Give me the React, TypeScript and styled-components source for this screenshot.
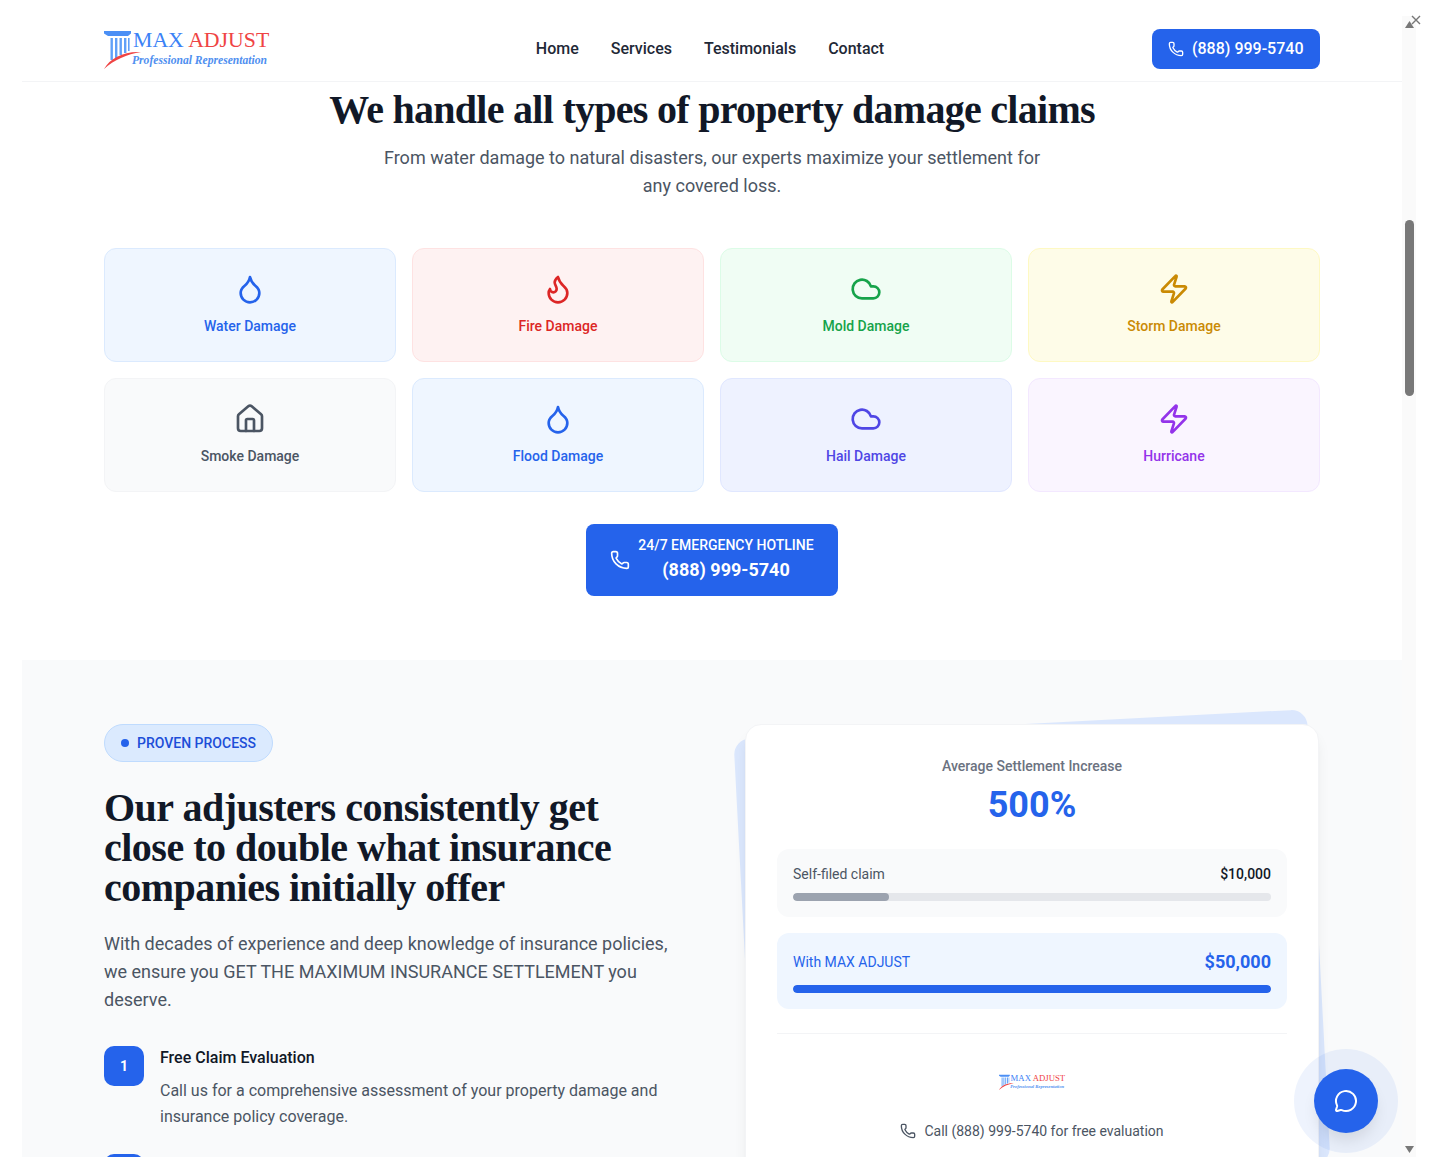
import React from "react";
import styled, { createGlobalStyle } from "styled-components";
import { Droplet, Flame, Cloud, Zap, Home, Phone, MessageCircle } from "lucide-react";

const Global = createGlobalStyle`
  html, body { margin: 0; padding: 0; background: #fff; height: 1176px; overflow: hidden; }
  body { font-family: Roboto, "Liberation Sans", sans-serif; color: #111827; }
  * { box-sizing: border-box; }
`;

const Stage = styled.div`
  position: relative;
  width: 1437px;
  height: 1176px;
  overflow: hidden;
  background: #fff;
`;
const Frame = styled.div`
  display: flex;
  margin-left: 22px;
  width: 1394px;
  height: 1157px;
`;
const Viewport = styled.div`
  width: 1380px;
  height: 1157px;
  overflow: hidden;
  background: #fff;
`;
const Header = styled.header`
  display: flex;
  align-items: center;
  justify-content: space-between;
  height: 82px;
  padding: 17px 82px 0;
  border-bottom: 1px solid #f3f4f6;
`;
const Nav = styled.nav`
  display: flex;
  gap: 32px;
  margin-left: -1px;
`;
const NavLink = styled.a`
  font-size: 16px;
  font-weight: 500;
  line-height: 24px;
  color: #1f2937;
`;
const CallButton = styled.a`
  display: flex;
  align-items: center;
  gap: 8px;
  width: 168px;
  height: 40px;
  padding: 0 16px 1px;
  border-radius: 8px;
  background: #2563eb;
  color: #fff;
  font-size: 16px;
  font-weight: 500;
`;

const LogoWrap = styled.div<{ $s: number }>`
  position: relative;
  width: ${(p) => 165 * p.$s}px;
  height: ${(p) => 41 * p.$s}px;
  font-family: "Liberation Serif", serif;
`;
const LogoArt = styled.svg`
  position: absolute;
  left: 0;
  top: 0;
  width: 100%;
  height: 100%;
`;
const LogoName = styled.div<{ $s: number }>`
  position: absolute;
  left: ${(p) => 29 * p.$s}px;
  top: ${(p) => -2 * p.$s}px;
  font-size: ${(p) => 21.8 * p.$s}px;
  line-height: ${(p) => 26 * p.$s}px;
  white-space: nowrap;
`;
const LogoBlue = styled.span`
  color: #3b82f6;
`;
const LogoRed = styled.span`
  color: #ef4444;
`;
const LogoTag = styled.div<{ $s: number }>`
  position: absolute;
  left: ${(p) => 28 * p.$s}px;
  top: ${(p) => 25 * p.$s}px;
  font-size: ${(p) => 11.6 * p.$s}px;
  line-height: ${(p) => 13 * p.$s}px;
  font-style: italic;
  font-weight: 700;
  color: #4f8ff0;
  white-space: nowrap;
`;

const Claims = styled.section`
  padding: 8px 82px 64px;
`;
const ClaimsTitle = styled.h2`
  margin: 0;
  text-align: center;
  font-family: "Liberation Serif", serif;
  font-weight: 700;
  font-size: 40px;
  line-height: 40px;
  letter-spacing: -0.72px;
  color: #111827;
`;
const ClaimsLead = styled.p`
  margin: 14px auto 48px;
  width: 672px;
  text-align: center;
  font-size: 18px;
  line-height: 28px;
  color: #4b5563;
`;
const CardGrid = styled.div`
  display: grid;
  grid-template-columns: repeat(4, 292px);
  gap: 16px;
`;
const DamageCard = styled.div<{ $bg: string; $line: string; $fg: string }>`
  display: flex;
  flex-direction: column;
  align-items: center;
  gap: 11px;
  height: 114px;
  padding: 24px;
  border-radius: 12px;
  border: 1px solid ${(p) => p.$line};
  background: ${(p) => p.$bg};
  color: ${(p) => p.$fg};
`;
const DamageLabel = styled.span`
  font-size: 14px;
  line-height: 20px;
  font-weight: 500;
`;
const HotlineRow = styled.div`
  display: flex;
  justify-content: center;
  margin-top: 32px;
`;
const Hotline = styled.a`
  display: flex;
  align-items: center;
  gap: 8px;
  width: 252px;
  height: 72px;
  padding: 0 24px;
  border-radius: 8px;
  background: #2563eb;
  color: #fff;
`;
const HotlineText = styled.div`
  display: flex;
  flex-direction: column;
  align-items: center;
  flex: 1;
`;
const HotlineSmall = styled.span`
  font-size: 14px;
  line-height: 20px;
  font-weight: 500;
  margin-top: -1px;
`;
const HotlineBig = styled.span`
  margin-top: 1px;
  font-size: 18px;
  line-height: 28px;
  font-weight: 700;
`;

const Process = styled.section`
  display: grid;
  grid-template-columns: 576px 574px;
  column-gap: 65px;
  padding: 64px 82px 0;
  background: #f9fafb;
  height: 497px;
`;
const Badge = styled.div`
  display: inline-flex;
  align-items: center;
  gap: 8px;
  height: 38px;
  padding: 0 16px;
  border-radius: 19px;
  background: #dbeafe;
  border: 1px solid #bfdbfe;
  color: #1d4ed8;
  font-size: 14px;
  font-weight: 500;
`;
const Dot = styled.i`
  width: 8px;
  height: 8px;
  border-radius: 50%;
  background: #2563eb;
`;
const ProcessTitle = styled.h2`
  margin: 26px 0 0;
  font-family: "Liberation Serif", serif;
  font-weight: 700;
  font-size: 40px;
  line-height: 40px;
  letter-spacing: -0.5px;
  color: #111827;
`;
const ProcessLead = styled.p`
  margin: 22px 0 0;
  font-size: 18px;
  line-height: 28px;
  color: #4b5563;
`;
const StepList = styled.div`
  display: flex;
  flex-direction: column;
  gap: 24px;
  margin-top: 32px;
`;
const Step = styled.div`
  display: flex;
  gap: 16px;
`;
const StepNum = styled.div`
  flex: none;
  display: flex;
  align-items: center;
  justify-content: center;
  width: 40px;
  height: 40px;
  border-radius: 10px;
  background: #2563eb;
  color: #fff;
  font-size: 14px;
  font-weight: 700;
`;
const StepTitle = styled.div`
  font-size: 16px;
  line-height: 24px;
  font-weight: 500;
  color: #111827;
`;
const StepText = styled.div`
  margin-top: 8px;
  font-size: 16px;
  line-height: 26px;
  color: #4b5563;
`;

const CardStack = styled.div`
  position: relative;
  height: 455px;
`;
const Tilt = styled.div`
  position: absolute;
  inset: 0;
  border-radius: 16px;
  background: #dbe7fd;
  transform: rotate(-3deg);
`;
const StatCard = styled.div`
  position: relative;
  height: 100%;
  padding: 31px;
  border-radius: 16px;
  background: #fff;
  border: 1px solid #f3f4f6;
  box-shadow: 0 10px 15px -3px rgba(0, 0, 0, 0.08), 0 4px 6px -4px rgba(0, 0, 0, 0.06);
`;
const StatCaption = styled.div`
  text-align: center;
  font-size: 14px;
  line-height: 20px;
  font-weight: 500;
  color: #6b7280;
`;
const StatValue = styled.div`
  margin-top: 9px;
  text-align: center;
  font-size: 36px;
  line-height: 40px;
  font-weight: 700;
  color: #2563eb;
`;
const Bars = styled.div`
  display: flex;
  flex-direction: column;
  gap: 16px;
  margin-top: 24px;
`;
const BarBox = styled.div<{ $bg: string }>`
  padding: 16px;
  border-radius: 12px;
  background: ${(p) => p.$bg};
`;
const BarHead = styled.div`
  display: flex;
  justify-content: space-between;
  align-items: center;
  margin: -1px 0 9px;
`;
const BarLabel = styled.span<{ $c: string }>`
  font-size: 14px;
  line-height: 20px;
  color: ${(p) => p.$c};
`;
const BarAmount = styled.span<{ $c: string; $big?: boolean }>`
  font-size: ${(p) => (p.$big ? 18 : 14)}px;
  line-height: ${(p) => (p.$big ? 28 : 20)}px;
  font-weight: ${(p) => (p.$big ? 700 : 500)};
  color: ${(p) => p.$c};
`;
const Track = styled.div`
  height: 8px;
  border-radius: 4px;
  background: #e5e7eb;
  overflow: hidden;
`;
const Fill = styled.div<{ $c: string }>`
  height: 100%;
  border-radius: 4px;
  background: ${(p) => p.$c};
`;
const CardFoot = styled.div`
  display: flex;
  flex-direction: column;
  align-items: center;
  margin-top: 24px;
  padding-top: 40px;
  border-top: 1px solid #f3f4f6;
`;
const CallNote = styled.div`
  display: flex;
  align-items: center;
  gap: 8px;
  margin-top: 31px;
  font-size: 14px;
  line-height: 20px;
  color: #4b5563;
`;

const Scrollbar = styled.div`
  display: flex;
  flex-direction: column;
  align-items: center;
  width: 14px;
  height: 1141px;
  margin-top: 16px;
  background: #fafafa;
`;
const Thumb = styled.div`
  width: 9px;
  height: 176px;
  margin: 204px 0 0 1px;
  border-radius: 5px;
  background: #787878;
`;

const Close = styled.div`
  position: absolute;
  left: 1410px;
  top: 11px;
  width: 12px;
  height: 12px;
  color: #777;
`;
const ArrowSvg = styled.svg<{ $top: number }>`
  position: absolute;
  left: 1405px;
  top: ${(p) => p.$top}px;
  width: 9px;
  height: 7px;
`;
const ChatHalo = styled.div`
  position: absolute;
  left: 1294px;
  top: 1049px;
  display: flex;
  align-items: center;
  justify-content: center;
  width: 104px;
  height: 104px;
  border-radius: 50%;
  background: rgba(37, 99, 235, 0.08);
`;
const ChatButton = styled.div`
  display: flex;
  align-items: center;
  justify-content: center;
  width: 64px;
  height: 64px;
  border-radius: 50%;
  background: #2563eb;
  color: #fff;
  box-shadow: 0 10px 15px -3px rgba(0, 0, 0, 0.1);
`;

function Logo({ s = 1 }: { s?: number }) {
  return (
    <LogoWrap $s={s}>
      <LogoArt viewBox="0 0 165 41">
        <path d="M0 2h27v2.4L24 7H4L0 4.4z" fill="#4b8ff5" />
        <path
          d="M6.5 9h2.4v22H6.5zM11 9h2.4v20H11zM15.5 9h2.4v17h-2.4zM20 9h2.4v15H20zM24 9h1.6v13H24z"
          fill="#60a0f8"
        />
        <path d="M0 40C6 29 20 22 37 23C23 25 10 31 0 40Z" fill="#ef4444" />
      </LogoArt>
      <LogoName $s={s}>
        <LogoBlue>MAX</LogoBlue> <LogoRed>ADJUST</LogoRed>
      </LogoName>
      <LogoTag $s={s}>Professional Representation</LogoTag>
    </LogoWrap>
  );
}

const damage = [
  { label: "Water Damage", Icon: Droplet, bg: "#eff6ff", line: "#dbeafe", fg: "#2563eb" },
  { label: "Fire Damage", Icon: Flame, bg: "#fef2f2", line: "#fee2e2", fg: "#dc2626" },
  { label: "Mold Damage", Icon: Cloud, bg: "#f0fdf4", line: "#dcfce7", fg: "#16a34a" },
  { label: "Storm Damage", Icon: Zap, bg: "#fefce8", line: "#fef9c3", fg: "#ca8a04" },
  { label: "Smoke Damage", Icon: Home, bg: "#f9fafb", line: "#f3f4f6", fg: "#4b5563" },
  { label: "Flood Damage", Icon: Droplet, bg: "#eff6ff", line: "#dbeafe", fg: "#2563eb" },
  { label: "Hail Damage", Icon: Cloud, bg: "#eef2ff", line: "#e0e7ff", fg: "#4f46e5" },
  { label: "Hurricane", Icon: Zap, bg: "#faf5ff", line: "#f3e8ff", fg: "#9333ea" },
];

export default function App() {
  return (
    <Stage>
      <Global />
      <Frame>
        <Viewport>
          <Header>
            <Logo />
            <Nav>
              <NavLink>Home</NavLink>
              <NavLink>Services</NavLink>
              <NavLink>Testimonials</NavLink>
              <NavLink>Contact</NavLink>
            </Nav>
            <CallButton>
              <Phone size={16} strokeWidth={2} />
              (888) 999-5740
            </CallButton>
          </Header>
          <Claims>
            <ClaimsTitle>We handle all types of property damage claims</ClaimsTitle>
            <ClaimsLead>
              From water damage to natural disasters, our experts maximize your settlement for any covered loss.
            </ClaimsLead>
            <CardGrid>
              {damage.map(({ label, Icon, bg, line, fg }) => (
                <DamageCard key={label} $bg={bg} $line={line} $fg={fg}>
                  <Icon size={32} strokeWidth={2} />
                  <DamageLabel>{label}</DamageLabel>
                </DamageCard>
              ))}
            </CardGrid>
            <HotlineRow>
              <Hotline>
                <Phone size={20} strokeWidth={2} />
                <HotlineText>
                  <HotlineSmall>24/7 EMERGENCY HOTLINE</HotlineSmall>
                  <HotlineBig>(888) 999-5740</HotlineBig>
                </HotlineText>
              </Hotline>
            </HotlineRow>
          </Claims>
          <Process>
            <div>
              <Badge>
                <Dot />
                PROVEN PROCESS
              </Badge>
              <ProcessTitle>
                Our adjusters consistently get close to double what insurance companies initially offer
              </ProcessTitle>
              <ProcessLead>
                With decades of experience and deep knowledge of insurance policies, we ensure you GET THE MAXIMUM
                INSURANCE SETTLEMENT you deserve.
              </ProcessLead>
              <StepList>
                <Step>
                  <StepNum>1</StepNum>
                  <div>
                    <StepTitle>Free Claim Evaluation</StepTitle>
                    <StepText>
                      Call us for a comprehensive assessment of your property damage and insurance policy coverage.
                    </StepText>
                  </div>
                </Step>
                <Step>
                  <StepNum />
                </Step>
              </StepList>
            </div>
            <CardStack>
              <Tilt />
              <StatCard>
                <StatCaption>Average Settlement Increase</StatCaption>
                <StatValue>500%</StatValue>
                <Bars>
                  <BarBox $bg="#f9fafb">
                    <BarHead>
                      <BarLabel $c="#4b5563">Self-filed claim</BarLabel>
                      <BarAmount $c="#111827">$10,000</BarAmount>
                    </BarHead>
                    <Track>
                      <Fill $c="#9ca3af" style={{ width: "20%" }} />
                    </Track>
                  </BarBox>
                  <BarBox $bg="#eff6ff">
                    <BarHead>
                      <BarLabel $c="#2563eb">With MAX ADJUST</BarLabel>
                      <BarAmount $c="#2563eb" $big>
                        $50,000
                      </BarAmount>
                    </BarHead>
                    <Track>
                      <Fill $c="#2563eb" style={{ width: "100%" }} />
                    </Track>
                  </BarBox>
                </Bars>
                <CardFoot>
                  <Logo s={0.4} />
                  <CallNote>
                    <Phone size={16} strokeWidth={2} />
                    Call (888) 999-5740 for free evaluation
                  </CallNote>
                </CardFoot>
              </StatCard>
            </CardStack>
          </Process>
        </Viewport>
        <Scrollbar>
          <Thumb />
        </Scrollbar>
      </Frame>
      <Close>
        <svg viewBox="0 0 12 12" width="12" height="12">
          <path d="M2 2l8 8M10 2l-8 8" stroke="currentColor" strokeWidth="1.4" />
        </svg>
      </Close>
      <ArrowSvg $top={21} viewBox="0 0 9 7">
        <path d="M4.5 0L9 7H0Z" fill="#787878" />
      </ArrowSvg>
      <ArrowSvg $top={1146} viewBox="0 0 9 7">
        <path d="M0 0H9L4.5 7Z" fill="#787878" />
      </ArrowSvg>
      <ChatHalo>
        <ChatButton>
          <MessageCircle size={24} strokeWidth={2} />
        </ChatButton>
      </ChatHalo>
    </Stage>
  );
}
